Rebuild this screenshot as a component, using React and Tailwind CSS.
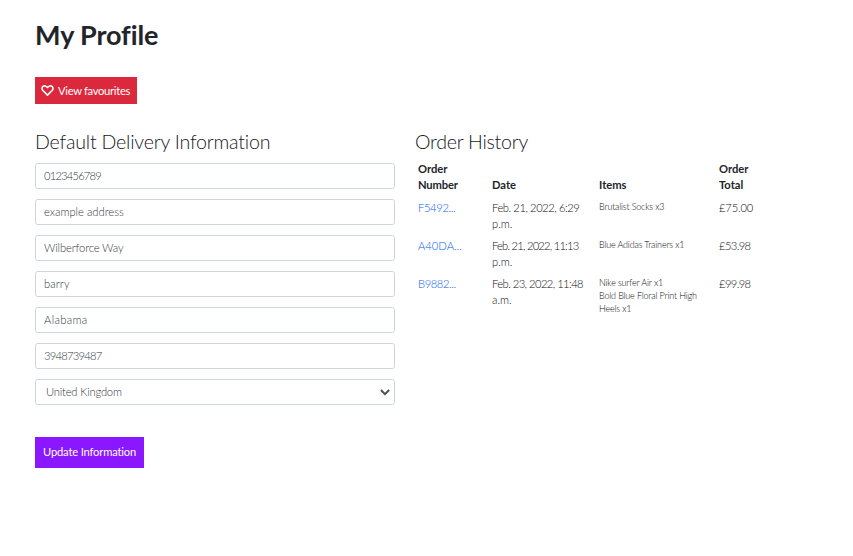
const fields = [
  { value: '0123456789', track: 'tracking-[-0.8px]' },
  { value: 'example address', track: 'tracking-[0px]' },
  { value: 'Wilberforce Way', track: 'tracking-[-0.12px]' },
  { value: 'barry', track: 'tracking-[0.1px]' },
  { value: 'Alabama', track: 'tracking-[0.35px]' },
  { value: '3948739487', track: 'tracking-[-0.75px]' },
];

const orders = [
  { id: 'F5492...', idTrack: 'tracking-[-0.35px]', date: ['Feb. 21, 2022, 6:29', 'p.m.'], dateTrack: 'tracking-[-0.43px]', items: ['Brutalist Socks x3'], total: '£75.00', totalTrack: 'tracking-[-0.15px]' },
  { id: 'A40DA...', idTrack: 'tracking-[0px]', date: ['Feb. 21, 2022, 11:13', 'p.m.'], dateTrack: 'tracking-[-0.78px]', items: ['Blue Adidas Trainers x1'], total: '£53.98', totalTrack: 'tracking-[-0.6px]' },
  { id: 'B9882...', idTrack: 'tracking-[-0.4px]', date: ['Feb. 23, 2022, 11:48', 'a.m.'], dateTrack: 'tracking-[-0.55px]', items: ['Nike surfer Air x1', 'Bold Blue Floral Print High', 'Heels x1'], total: '£99.98', totalTrack: 'tracking-[-0.6px]' },
];

const columns = 'grid grid-cols-[74px_107px_120px_60px] px-[3px] whitespace-nowrap';

export default function App() {
  return (
    <main className="h-[556px] w-[853px] overflow-hidden bg-white px-[35px] pt-[18px] font-['Lato',sans-serif] text-[11.2px] leading-4 text-[#212529]">
      <h1 className="h-[34px] whitespace-nowrap text-[27px] font-bold leading-[34px] tracking-[-0.1px]">My Profile</h1>
      <a className="mt-[25px] flex h-[27px] w-[102px] items-center whitespace-nowrap bg-[#dc283c] pl-[6px] text-white">
        <svg className="mr-[4px] h-3 w-[13px]" viewBox="0 0 13 12" fill="none" stroke="currentColor" strokeWidth="1.6" strokeLinejoin="round">
          <path d="M6.5 10.1 1.9 5.5C.7 4.2.8 2.3 2 1.4 3.3.4 5.2.8 6.5 2.5 7.8.8 9.7.4 11 1.4c1.2.9 1.3 2.8.1 4.1Z" />
        </svg>
        <span className="tracking-[-0.3px]">View favourites</span>
      </a>
      <div className="mt-[26px] flex gap-5">
        <section className="w-[360px]">
          <h2 className="h-[24px] whitespace-nowrap text-[19.6px] font-light leading-[24px] tracking-[-0.2px] text-[#15181b]">Default Delivery Information</h2>
          <form className="mt-[9px] flex flex-col gap-[10px] font-light text-[#30363c]">
            {fields.map((f) => (
              <div key={f.value} className="flex h-[26px] items-center rounded-[2.5px] border border-[#ced4da] pl-[8px]">
                <span className={f.track}>{f.value}</span>
              </div>
            ))}
            <div className="flex h-[26px] items-center justify-between rounded-[2.5px] border border-[#ced4da] pl-[10px] pr-[4px]">
              <span className="tracking-[-0.18px]">United Kingdom</span>
              <svg className="h-[7px] w-[10px]" viewBox="0 0 10 7" fill="none" stroke="#495057" strokeWidth="2">
                <path d="M.9 1 5 5.1 9.1 1" />
              </svg>
            </div>
          </form>
          <button className="mt-8 flex h-[31px] w-[109px] items-center whitespace-nowrap bg-[#8a17ff] pl-[8px] pb-px tracking-[-0.17px] text-white">Update Information</button>
        </section>
        <section className="w-[380px]">
          <h2 className="h-[24px] whitespace-nowrap text-[19.6px] font-light leading-[24px] tracking-[-0.25px] text-[#15181b]">Order History</h2>
          <div className={`${columns} mt-[7px] items-end font-bold`}>
            <span>Order<br /><span className="tracking-[-0.15px]">Number</span></span>
            <span>Date</span>
            <span>Items</span>
            <span>Order<br />Total</span>
          </div>
          <div className="mt-[7px] flex flex-col gap-[6px] font-light text-[#0c0f12]">
            {orders.map((o) => (
              <div key={o.id} className={columns}>
                <a className={`text-[#0560f0] ${o.idTrack}`}>{o.id}</a>
                <span className={o.dateTrack}>{o.date[0]}<br /><span className="tracking-[0px]">{o.date[1]}</span></span>
                <div className="text-[9px] leading-[13px] tracking-[-0.18px]">
                  {o.items.map((item) => <p key={item}>{item}</p>)}
                </div>
                <span className={o.totalTrack}>{o.total}</span>
              </div>
            ))}
          </div>
        </section>
      </div>
    </main>
  );
}
